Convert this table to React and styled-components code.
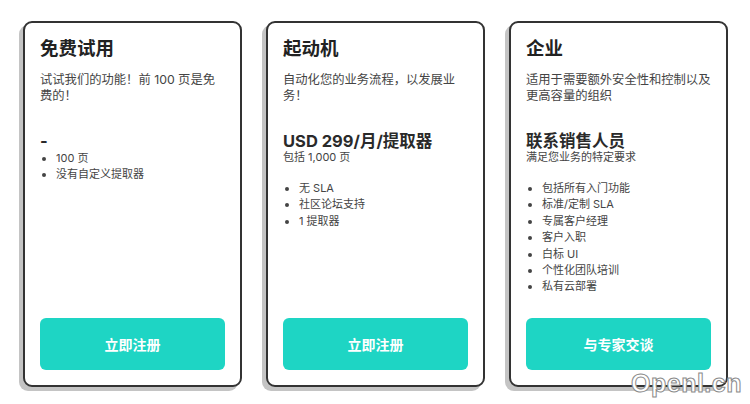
import styled, { createGlobalStyle } from "styled-components";

const GlobalStyle = createGlobalStyle`
  * { box-sizing: border-box; }
  body {
    margin: 0;
    background: #ffffff;
    font-family: Inter, "Noto Sans CJK SC", sans-serif;
    color: #333333;
  }
`;

const plans = [
  {
    title: "免费试用",
    description: "试试我们的功能！前 100 页是免费的！",
    price: "-",
    features: ["100 页", "没有自定义提取器"],
    action: "立即注册",
  },
  {
    title: "起动机",
    description: "自动化您的业务流程，以发展业务！",
    price: "USD 299/月/提取器",
    note: "包括 1,000 页",
    features: ["无 SLA", "社区论坛支持", "1 提取器"],
    action: "立即注册",
  },
  {
    title: "企业",
    description: "适用于需要额外安全性和控制以及更高容量的组织",
    price: "联系销售人员",
    note: "满足您业务的特定要求",
    features: [
      "包括所有入门功能",
      "标准/定制 SLA",
      "专属客户经理",
      "客户入职",
      "白标 UI",
      "个性化团队培训",
      "私有云部署",
    ],
    action: "与专家交谈",
  },
];

export default function App() {
  return (
    <>
      <GlobalStyle />
      <Page>
        {plans.map((p) => (
          <Plan key={p.title} {...p} />
        ))}
        <Watermark>Openl.cn</Watermark>
      </Page>
    </>
  );
}

function Plan({ title, description, price, note, features, action }) {
  return (
    <Card>
      <Title>{title}</Title>
      <Description>{description}</Description>
      <Price>{price}</Price>
      {note && <Note>{note}</Note>}
      <Features spaced={!!note}>
        {features.map((f) => (
          <li key={f}>{f}</li>
        ))}
      </Features>
      <Action>{action}</Action>
    </Card>
  );
}

const Page = styled.div`
  position: relative;
  width: 750px;
  height: 404px;
  display: grid;
  grid-template-columns: repeat(3, 219px);
  gap: 24px;
  padding: 21px 0 0 23px;
`;

const Card = styled.div`
  height: 366px;
  display: flex;
  flex-direction: column;
  padding: 15px;
  background: #ffffff;
  border: 2px solid #333333;
  border-radius: 9px;
  box-shadow: -4px 4px 0 #c4c4c4;
`;

const Title = styled.h2`
  margin: 0;
  font-size: 18.5px;
  line-height: 20px;
  font-weight: 700;
  color: #222222;
`;

const Description = styled.p`
  margin: 14px 0 0;
  font-size: 12.3px;
  line-height: 16px;
  color: #444444;
`;

const Price = styled.div`
  margin-top: 29px;
  font-size: 16.5px;
  line-height: 17px;
  font-weight: 700;
  color: #2a2a2a;
`;

const Note = styled.div`
  font-size: 11px;
  line-height: 14px;
  color: #444444;
`;

const Features = styled.ul`
  margin: ${(p) => (p.spaced ? "16px" : "0")} 0 0;
  padding-left: 16px;
  font-size: 11px;
  line-height: 16.4px;
  color: #444444;
`;

const Action = styled.button`
  margin-top: auto;
  height: 52px;
  width: 100%;
  border: none;
  border-radius: 6px;
  background: #1ed5c4;
  color: #ffffff;
  font-family: Inter, "Noto Sans CJK SC", sans-serif;
  font-size: 14px;
  font-weight: 700;
  cursor: pointer;
`;

const Watermark = styled.span`
  position: absolute;
  right: 8px;
  bottom: 6px;
  font-family: "Liberation Sans", sans-serif;
  font-size: 25px;
  font-weight: 700;
  color: #ffffff;
  -webkit-text-stroke: 1px #8a8a8a;
  letter-spacing: 0.5px;
`;
